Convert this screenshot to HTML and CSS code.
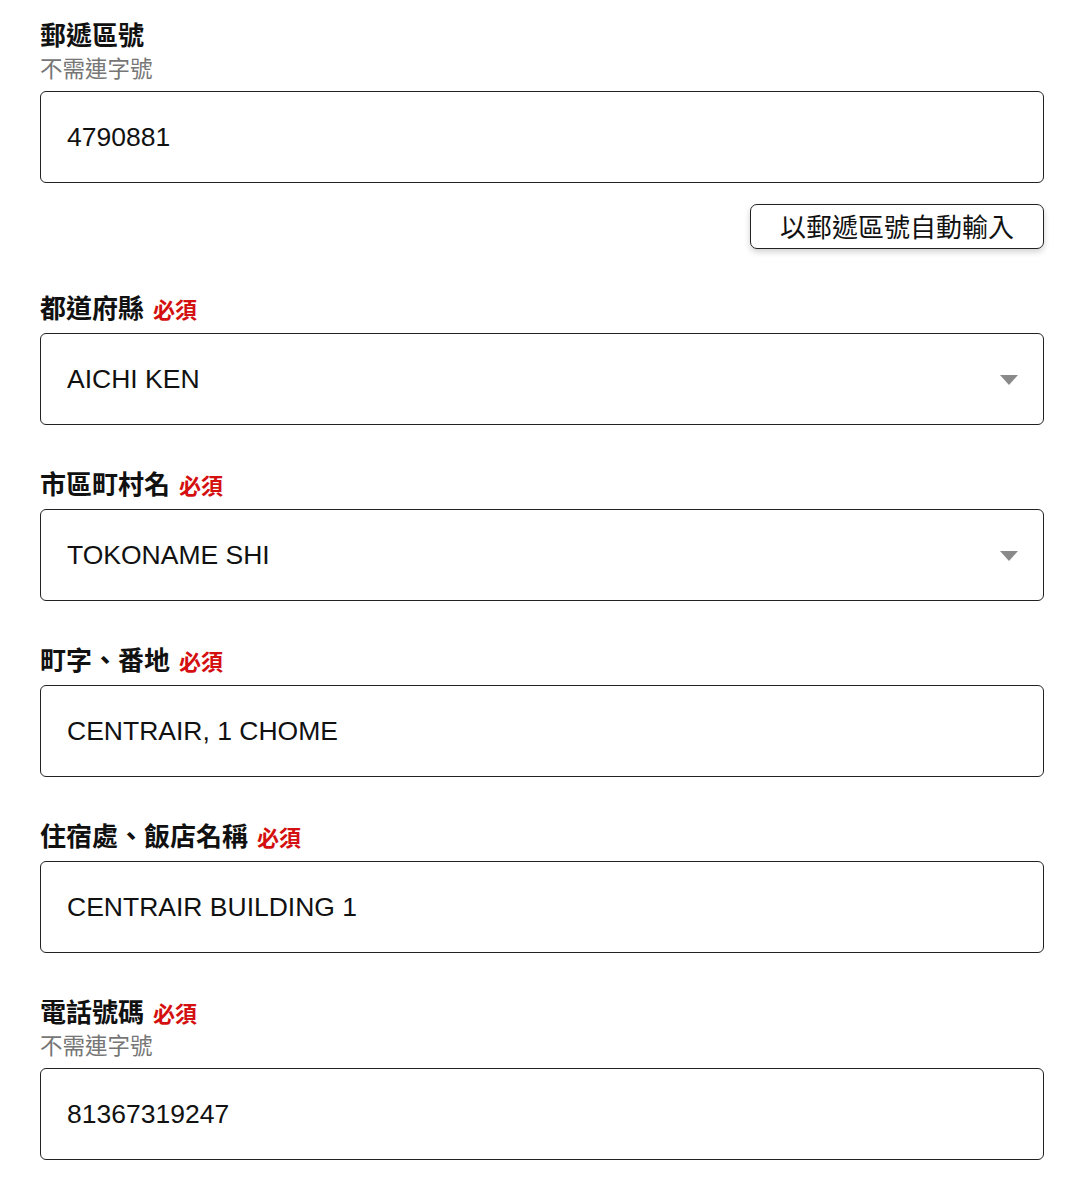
FILE: index.html
```html
<!DOCTYPE html>
<html lang="zh-Hant">
<head>
<meta charset="utf-8">
<link rel="stylesheet" href="styles.css">
</head>
<body>
<form class="form">
  <div class="field first">
    <div class="label">郵遞區號</div>
    <div class="hint">不需連字號</div>
    <input class="control" type="text" value="4790881">
  </div>
  <div class="actions">
    <button type="button" class="btn">以郵遞區號自動輸入</button>
  </div>

  <div class="field">
    <div class="label">都道府縣<span class="req">必須</span></div>
    <div class="select-wrap">
      <select class="control select"><option>AICHI KEN</option></select>
      <svg class="arrow" width="18" height="10" viewBox="0 0 18 10"><path d="M0 0H18L9 10Z" fill="#8a8a8a"/></svg>
    </div>
  </div>

  <div class="field">
    <div class="label">市區町村名<span class="req">必須</span></div>
    <div class="select-wrap">
      <select class="control select"><option>TOKONAME SHI</option></select>
      <svg class="arrow" width="18" height="10" viewBox="0 0 18 10"><path d="M0 0H18L9 10Z" fill="#8a8a8a"/></svg>
    </div>
  </div>

  <div class="field">
    <div class="label">町字、番地<span class="req">必須</span></div>
    <input class="control" type="text" value="CENTRAIR, 1 CHOME">
  </div>

  <div class="field">
    <div class="label">住宿處、飯店名稱<span class="req">必須</span></div>
    <input class="control" type="text" value="CENTRAIR BUILDING 1">
  </div>

  <div class="field">
    <div class="label">電話號碼<span class="req">必須</span></div>
    <div class="hint">不需連字號</div>
    <input class="control" type="text" value="81367319247">
  </div>
</form>
</body>
</html>
```

FILE: styles.css
```css
* { box-sizing: border-box; }
html, body { margin: 0; background: #fff; }
body {
  font-family: "Liberation Sans", "Noto Sans CJK TC", sans-serif;
  color: #111;
}
.form {
  padding: 18px 37px 0 40px;
  display: flex;
  flex-direction: column;
}
.field {
  display: flex;
  flex-direction: column;
  margin-top: 42px;
}
.field.first { margin-top: 0; }
.label {
  font-family: "Noto Sans CJK TC", sans-serif;
  font-size: 26px;
  font-weight: 700;
  line-height: 32px;
  height: 34px;
  color: #111;
  display: flex;
  align-items: flex-start;
}
.req {
  color: #d40f0f;
  font-size: 22px;
  margin-left: 9px;
  line-height: 34px;
}
.hint {
  font-family: "Noto Sans CJK TC", sans-serif;
  font-size: 22.5px;
  line-height: 31px;
  height: 31px;
  color: #767676;
}
.control {
  margin-top: 8px;
  width: 100%;
  height: 92px;
  border: 1.6px solid #222;
  border-radius: 6px;
  padding: 0 26px;
  font-family: "Liberation Sans", "Noto Sans CJK TC", sans-serif;
  font-size: 26.5px;
  color: #111;
  background: #fff;
  outline: none;
}
.select-wrap {
  position: relative;
  display: flex;
  flex-direction: column;
}
.select {
  appearance: none;
  -webkit-appearance: none;
}
.arrow {
  position: absolute;
  right: 26px;
  top: 50%;
}
.actions {
  display: flex;
  justify-content: flex-end;
  margin-top: 21px;
}
.btn {
  width: 294px;
  height: 45px;
  border: 1.6px solid #222;
  border-radius: 7px;
  background: #fff;
  box-shadow: 0 3px 6px rgba(0,0,0,0.18);
  font-family: "Noto Sans CJK TC", sans-serif;
  font-size: 26px;
  color: #111;
  padding: 0 0 2px;
  line-height: 1;
}
```
